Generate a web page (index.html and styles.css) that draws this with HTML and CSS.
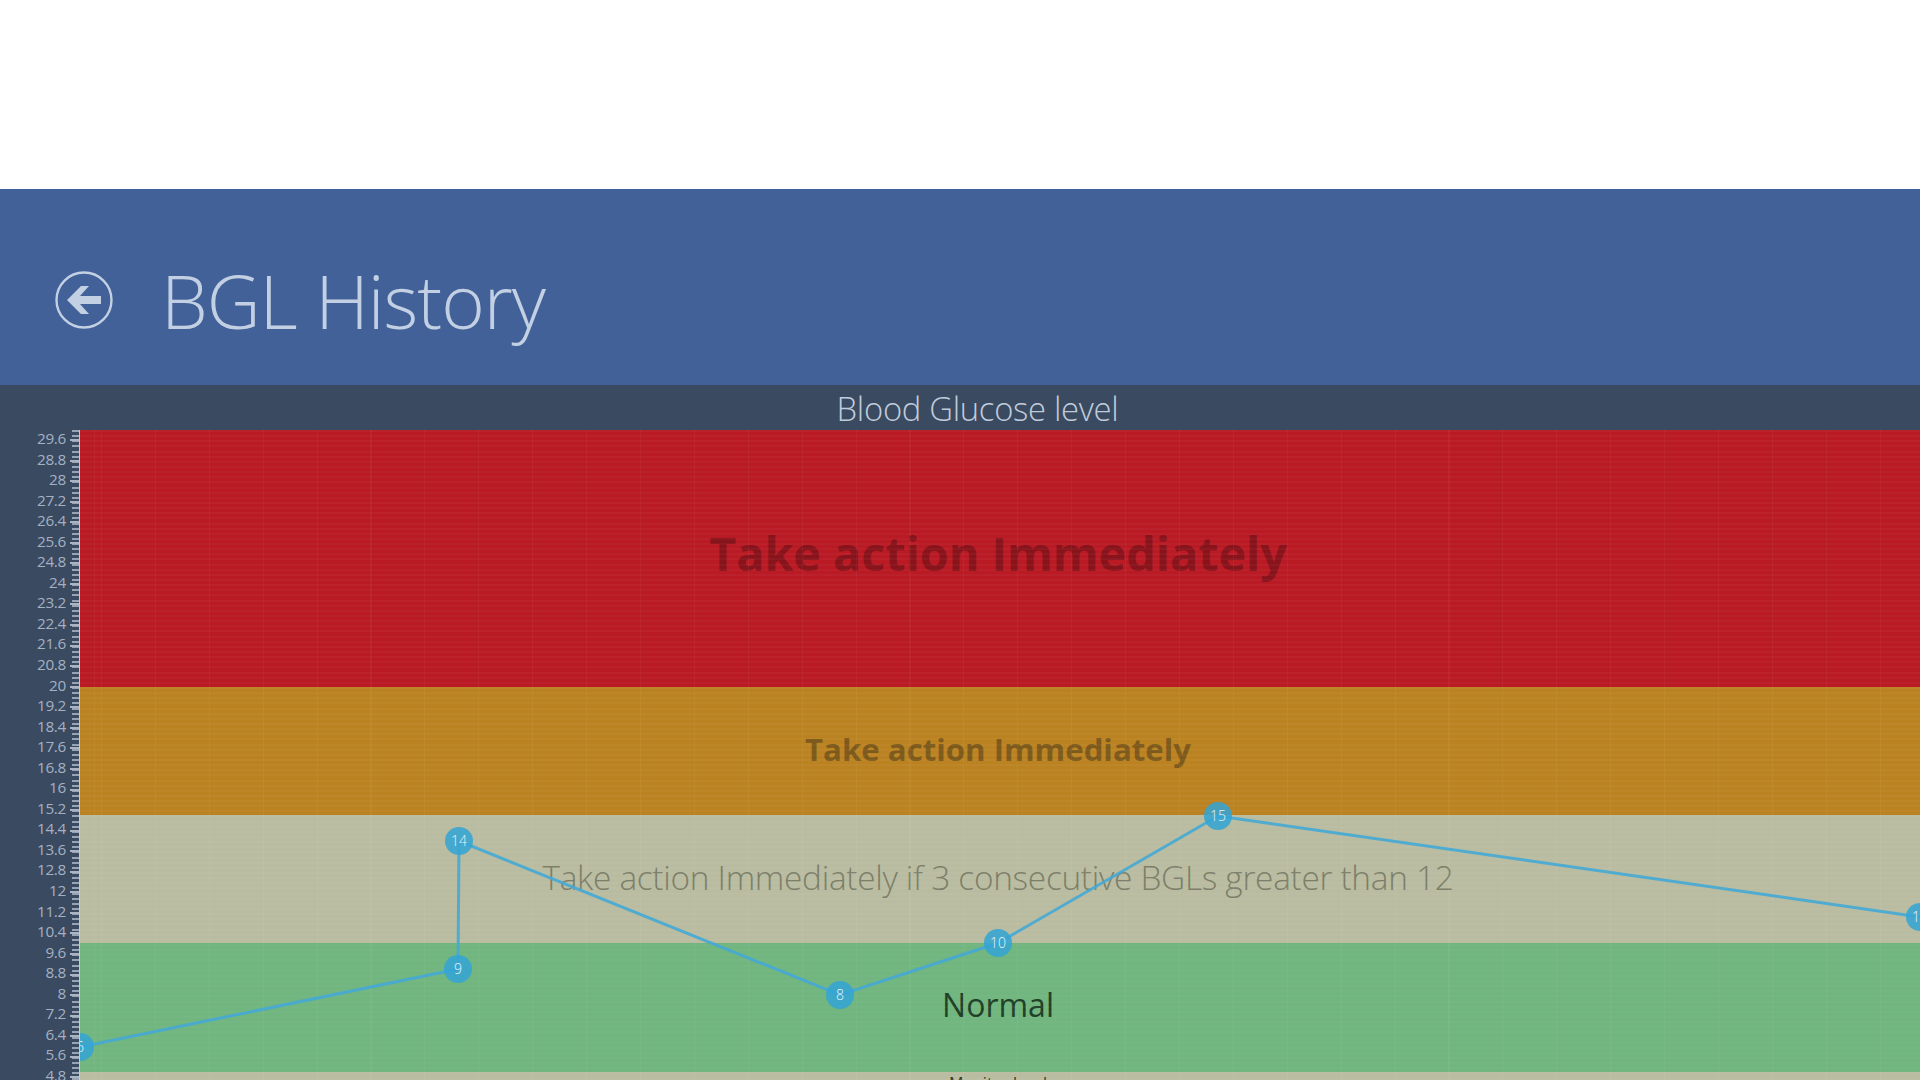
FILE: index.html
```html
<!DOCTYPE html>
<html lang="en">
<head>
  <meta charset="UTF-8">
  <meta name="viewport" content="width=device-width, initial-scale=1.0">
  <title>BGL History</title>
  <link rel="stylesheet" href="styles.css">
</head>
<body>

  <div class="top-space"></div>

  <header class="page-header">
    <button class="back-button" type="button" aria-label="Back">
      <svg width="58" height="58" viewBox="0 0 58 58">
        <circle cx="29" cy="29" r="27.5" fill="none" stroke="#c3d0e4" stroke-width="2.4"/>
        <path d="M12 29 L26 15 H34 L25 25 H46 V33 H25 L34 43 H26 Z" fill="#c3d0e4"/>
      </svg>
    </button>
    <h1 class="page-title">BGL History</h1>
  </header>

  <section class="chart">
    <h2 class="chart-title">Blood Glucose level</h2>
    <div class="chart-body">
      <div class="axis">
        <div class="axis-labels">
          <span>29.6</span><span>28.8</span><span>28</span><span>27.2</span>
          <span>26.4</span><span>25.6</span><span>24.8</span><span>24</span>
          <span>23.2</span><span>22.4</span><span>21.6</span><span>20.8</span>
          <span>20</span><span>19.2</span><span>18.4</span><span>17.6</span>
          <span>16.8</span><span>16</span><span>15.2</span><span>14.4</span>
          <span>13.6</span><span>12.8</span><span>12</span><span>11.2</span>
          <span>10.4</span><span>9.6</span><span>8.8</span><span>8</span>
          <span>7.2</span><span>6.4</span><span>5.6</span><span>4.8</span>
        </div>
        <div class="axis-ticks"></div>
      </div>

      <div class="plot">
        <div class="band band-red"><span class="band-text text-red">Take action Immediately</span></div>
        <div class="band band-orange"><span class="band-text text-orange">Take action Immediately</span></div>
        <div class="band band-beige"><span class="band-text text-beige">Take action Immediately if 3 consecutive BGLs greater than 12</span></div>
        <div class="band band-green"><span class="band-text text-green">Normal</span></div>
        <div class="band band-low"><span class="band-text text-low">Monitor level</span></div>
        <div class="grid-lines"></div>

        <!-- plot starts at 80,430 on the page -->
        <svg class="series" width="1840" height="650" viewBox="0 0 1840 650">
          <polyline class="series-line" points="0,617 378,539 379,411 760,565 918,513 1138,386 1840,487"/>
          <g class="series-dots">
            <circle cx="0" cy="617" r="14"/>
            <circle cx="378" cy="539" r="14"/>
            <circle cx="379" cy="411" r="14"/>
            <circle cx="760" cy="565" r="14"/>
            <circle cx="918" cy="513" r="14"/>
            <circle cx="1138" cy="386" r="14"/>
            <circle cx="1840" cy="487" r="14"/>
          </g>
          <g class="series-labels">
            <text x="0" y="622">6</text>
            <text x="378" y="544">9</text>
            <text x="379" y="416">14</text>
            <text x="760" y="570">8</text>
            <text x="918" y="518">10</text>
            <text x="1138" y="391">15</text>
            <text x="1840" y="492">11</text>
          </g>
        </svg>
      </div>
    </div>
  </section>

</body>
</html>
```

FILE: styles.css
```css
html, body {
  margin: 0;
  height: 1080px;
  overflow: hidden;
}

body {
  display: flex;
  flex-direction: column;
  font-family: "Open Sans", "Noto Sans", sans-serif;
  background-color: #fff;
}

.top-space {
  height: 189px;
  flex: none;
}

.page-header {
  height: 196px;
  flex: none;
  box-sizing: border-box;
  display: flex;
  align-items: center;
  padding: 26px 0 0 55px;
  background-color: #416198;
}

.back-button {
  width: 58px;
  height: 58px;
  padding: 0;
  border: none;
  background: none;
}

.back-button svg {
  display: block;
}

.page-title {
  margin: 0 0 0 48px;
  font-size: 74.5px;
  font-weight: 300;
  letter-spacing: -1px;
  line-height: 1;
  color: #c3d0e4;
}

.chart {
  flex: 1;
  min-height: 0;
  display: flex;
  flex-direction: column;
  background-color: #3a4a60;
}

.chart-title {
  height: 45px;
  flex: none;
  margin: 0;
  padding-left: 35px;
  text-align: center;
  font-size: 32.8px;
  font-weight: 300;
  line-height: 47px;
  letter-spacing: -0.3px;
  color: #c0ccdb;
}

.chart-body {
  flex: 1;
  min-height: 0;
  display: flex;
}

.axis {
  width: 80px;
  flex: none;
  display: flex;
  border-right: 1px solid #c4cad3;
  box-sizing: border-box;
}

.axis-labels {
  width: 66px;
  flex: none;
  display: flex;
  flex-direction: column;
  align-items: flex-end;
  margin-top: -2px;
}

.axis-labels span {
  flex: none;
  height: 20.56px;
  line-height: 20.56px;
  font-size: 15.3px;
  letter-spacing: -0.3px;
  color: #a5b1c2;
}

.axis-ticks {
  width: 9px;
  margin-left: auto;
  background-image:
    repeating-linear-gradient(to bottom, #aab4c3 0, #aab4c3 2px, transparent 2px, transparent 20.56px),
    repeating-linear-gradient(to bottom, #98a4b6 0, #98a4b6 2px, transparent 2px, transparent 5.14px);
  background-size: 100% 100%, 7px 100%;
  background-position: 0 9px, right 0;
  background-repeat: no-repeat;
}

.plot {
  flex: 1;
  position: relative;
  overflow: hidden;
}

.band {
  display: flex;
  align-items: center;
  justify-content: center;
  box-sizing: border-box;
  padding-right: 4px;
  overflow: hidden;
}

.band-text {
  white-space: nowrap;
}

.band-red {
  height: 257px;
  background-color: #b91a24;
}

.band-orange {
  height: 128px;
  background-color: #bb8221;
}

.band-beige {
  height: 128px;
  background-color: #b9bca0;
}

.band-green {
  height: 129px;
  background-color: #71b57f;
}

.band-low {
  height: 128px;
  align-items: flex-start;
  background-color: #b9bca0;
}

.text-red {
  margin-bottom: 12px;
  font-size: 46.7px;
  font-weight: 700;
  color: #88131b;
}

.text-orange {
  margin-bottom: 5px;
  font-size: 31.2px;
  font-weight: 700;
  color: #7d5a1c;
}

.text-beige {
  margin-bottom: 5px;
  font-size: 33.4px;
  font-weight: 300;
  letter-spacing: -0.3px;
  color: #7b7e68;
}

.text-green {
  margin-bottom: 6px;
  font-size: 32px;
  font-weight: 400;
  color: #1f3f27;
}

.text-low {
  font-size: 16px;
  color: #2f3a2b;
}

.grid-lines {
  position: absolute;
  inset: 0;
  background-image:
    repeating-linear-gradient(to right, rgba(255, 255, 255, 0.04) 0, rgba(255, 255, 255, 0.04) 1px, transparent 1px, transparent 53.9px),
    repeating-linear-gradient(to bottom, rgba(255, 255, 255, 0.03) 0, rgba(255, 255, 255, 0.03) 2px, transparent 2px, transparent 5.14px);
  background-position: 21px 0, 0 0;
}

.series {
  position: absolute;
  left: 0;
  top: 0;
  overflow: hidden;
}

.series-line {
  fill: none;
  stroke: #45a8d6;
  stroke-opacity: 0.9;
  stroke-width: 3;
}

.series-dots circle {
  fill: #33a4d6;
  fill-opacity: 0.85;
}

.series-labels text {
  font-family: "Open Sans", sans-serif;
  font-size: 14px;
  font-weight: 300;
  text-anchor: middle;
  fill: #e8f5fb;
}
```
